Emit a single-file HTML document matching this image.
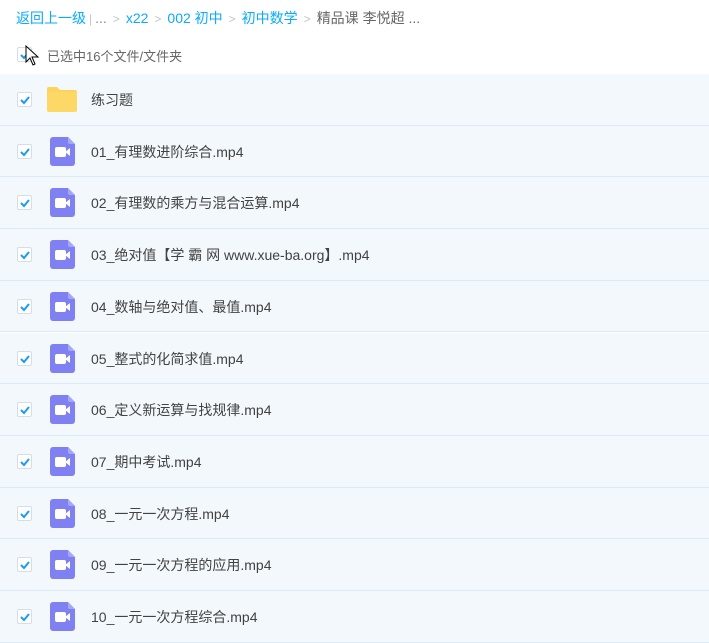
<!DOCTYPE html>
<html><head><meta charset="utf-8"><style>
*{margin:0;padding:0;box-sizing:border-box}
body{width:709px;height:640px;overflow:hidden;background:#fff;font-family:"Liberation Sans","Noto Sans CJK SC",sans-serif;position:relative}
.bc{position:absolute;left:16px;top:8px;font-size:14px;color:#09aaff;white-space:nowrap}
.bc .g{color:#c0c4cc;margin:0 6px;font-size:12px}
.bc .d{color:#666}
.sel{position:absolute;left:47px;top:46px;font-size:13px;color:#666}
.cb{position:absolute;left:17px;width:15px;height:15px;border:1px solid #d6dde6;border-radius:2px;background:#fff}
.cb svg{position:absolute;left:1px;top:1px}
.row{position:absolute;left:0;width:709px;height:51.7px;background:#f3f8fd;border-bottom:1.5px solid #dce9f7}
.row .cb{top:18px}
.row .t{position:absolute;left:91px;top:16px;font-size:14px;color:#424242}
.vi{position:absolute;left:50px;top:11px}
</style></head><body>
<div class="bc">返回上一级<span class="g" style="margin:0 3px">|</span><span class="d" style="color:#888">...</span><span class="g">&gt;</span>x22<span class="g">&gt;</span>002 初中<span class="g">&gt;</span>初中数学<span class="g">&gt;</span><span class="d">精品课 李悦超 ...</span></div>
<div class="cb" style="top:47px"><svg width="12" height="12" viewBox="0 0 12 12"><path d="M2 6l3 3 5-6" stroke="#1a9cf0" stroke-width="2" fill="none"/></svg></div>
<svg style="position:absolute;left:25px;top:45px" width="16" height="22" viewBox="0 0 16 22"><path d="M1 1v16l4-4 3 7 2-1-3-7h6z" fill="#fff" stroke="#000" stroke-width="1"/></svg>
<div class="sel">已选中16个文件/文件夹</div>
<div id="rows"></div>
<script>
var names=["练习题","01_有理数进阶综合.mp4","02_有理数的乘方与混合运算.mp4","03_绝对值【学 霸 网 www.xue-ba.org】.mp4","04_数轴与绝对值、最值.mp4","05_整式的化简求值.mp4","06_定义新运算与找规律.mp4","07_期中考试.mp4","08_一元一次方程.mp4","09_一元一次方程的应用.mp4","10_一元一次方程综合.mp4"];
var h="";
names.forEach(function(n,i){
var top=74+i*51.7;
var icon=i==0?'<svg class="vi" style="left:47px;top:13px" width="30" height="25" viewBox="0 0 30 25"><path d="M0 2a2 2 0 0 1 2-2h8l3 3h15a2 2 0 0 1 2 2v18a2 2 0 0 1-2 2H2a2 2 0 0 1-2-2z" fill="#fcd35b"/><rect x="0" y="5" width="30" height="20" rx="2" fill="#fdd866"/></svg>'
:'<svg class="vi" width="25" height="29" viewBox="0 0 25 29"><path d="M3 0h15l7 7v19a3 3 0 0 1-3 3H3a3 3 0 0 1-3-3V3a3 3 0 0 1 3-3z" fill="#7f80f1"/><path d="M18 0l7 7h-5a2 2 0 0 1-2-2z" fill="#a6a7f7"/><rect x="5" y="10" width="11" height="10" rx="2" fill="#fff"/><path d="M15 15l5-4v8z" fill="#fff"/></svg>';
h+='<div class="row" style="top:'+top+'px"><div class="cb"><svg width="12" height="12" viewBox="0 0 12 12"><path d="M2 6l3 3 5-6" stroke="#1a9cf0" stroke-width="2" fill="none"/></svg></div>'+icon+'<div class="t">'+n+'</div></div>';
});
document.getElementById("rows").innerHTML=h;
</script>
</body></html>
